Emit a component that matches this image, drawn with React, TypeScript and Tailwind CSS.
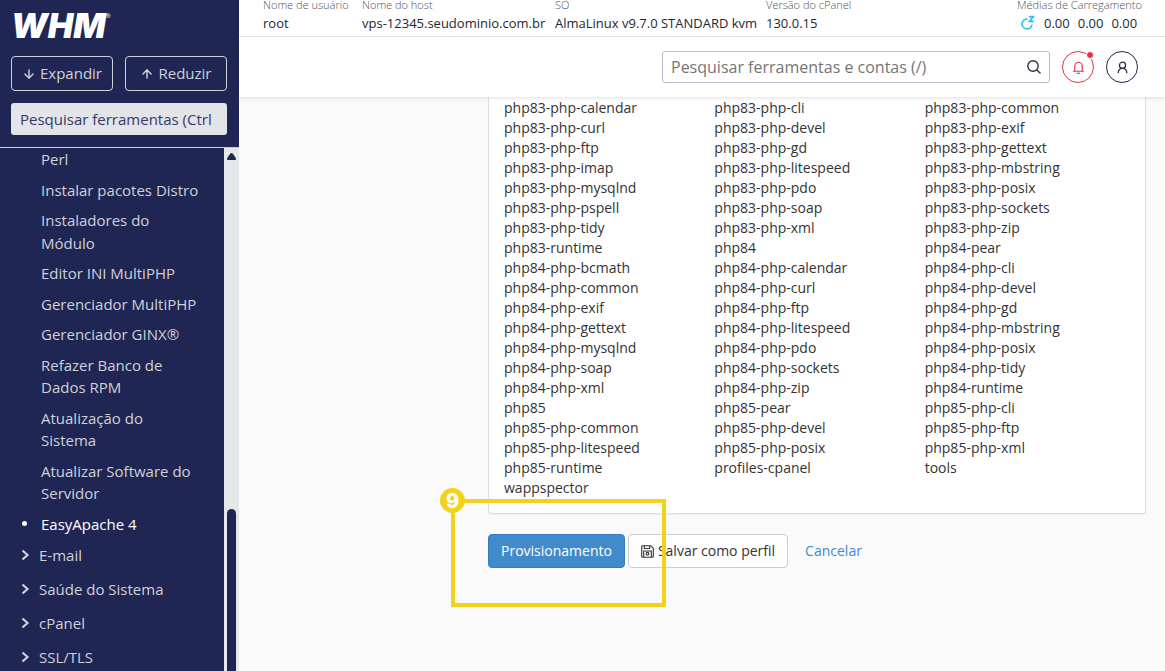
import React from 'react';
import { FiArrowDown, FiArrowUp } from 'react-icons/fi';

const subItems = [
  'Perl',
  'Instalar pacotes Distro',
  'Instaladores do Módulo',
  'Editor INI MultiPHP',
  'Gerenciador MultiPHP',
  'Gerenciador GINX®',
  'Refazer Banco de Dados RPM',
  'Atualização do Sistema',
  'Atualizar Software do Servidor',
];

const categories = ['E-mail', 'Saúde do Sistema', 'cPanel', 'SSL/TLS'];

const serverInfo = [
  { label: 'Nome de usuário', value: 'root' },
  { label: 'Nome do host', value: 'vps-12345.seudominio.com.br' },
  { label: 'SO', value: 'AlmaLinux v9.7.0 STANDARD kvm' },
  { label: 'Versão do cPanel', value: '130.0.15' },
];

const packages = [
  'php83-php-calendar', 'php83-php-cli', 'php83-php-common',
  'php83-php-curl', 'php83-php-devel', 'php83-php-exif',
  'php83-php-ftp', 'php83-php-gd', 'php83-php-gettext',
  'php83-php-imap', 'php83-php-litespeed', 'php83-php-mbstring',
  'php83-php-mysqlnd', 'php83-php-pdo', 'php83-php-posix',
  'php83-php-pspell', 'php83-php-soap', 'php83-php-sockets',
  'php83-php-tidy', 'php83-php-xml', 'php83-php-zip',
  'php83-runtime', 'php84', 'php84-pear',
  'php84-php-bcmath', 'php84-php-calendar', 'php84-php-cli',
  'php84-php-common', 'php84-php-curl', 'php84-php-devel',
  'php84-php-exif', 'php84-php-ftp', 'php84-php-gd',
  'php84-php-gettext', 'php84-php-litespeed', 'php84-php-mbstring',
  'php84-php-mysqlnd', 'php84-php-pdo', 'php84-php-posix',
  'php84-php-soap', 'php84-php-sockets', 'php84-php-tidy',
  'php84-php-xml', 'php84-php-zip', 'php84-runtime',
  'php85', 'php85-pear', 'php85-php-cli',
  'php85-php-common', 'php85-php-devel', 'php85-php-ftp',
  'php85-php-litespeed', 'php85-php-posix', 'php85-php-xml',
  'php85-runtime', 'profiles-cpanel', 'tools',
  'wappspector',
];

const Sidebar: React.FC = () => (
  <aside className="flex w-[239px] shrink-0 flex-col bg-[#202653] text-[15px] font-medium text-[#cfd0d8]">
    {/* Logo, buttons and tool search */}
    <div className="border-b border-[#c8cad8] pt-2 pr-3 pb-3 pl-[11px]">
      <a href="#home" className="flex h-9 items-center text-white">
        <span className="font-['Inter',sans-serif] text-[34px] leading-9 font-black italic">WHM</span>
        <span className="mb-5 text-[6px] leading-3">®</span>
      </a>
      <div className="mt-3 grid grid-cols-2 gap-3">
        <button className="flex h-[35px] items-center justify-center gap-1 rounded border border-[#cfd0d8]">
          <FiArrowDown className="size-[14px]" strokeWidth={2.5} />
          Expandir
        </button>
        <button className="flex h-[35px] items-center justify-center gap-1 rounded border border-[#cfd0d8]">
          <FiArrowUp className="size-[14px]" strokeWidth={2.5} />
          Reduzir
        </button>
      </div>
      <input
        type="text"
        aria-label="Pesquisar ferramentas"
        placeholder="Pesquisar ferramentas (Ctrl + /)"
        className="mt-3 block h-8 w-full rounded-[3px] bg-[#e2e4e8] pr-4 pl-[9px] text-[15px] font-normal placeholder:text-[#34396a]"
      />
    </div>

    <div className="flex min-h-0 flex-1">
      {/* Navigation */}
      <nav className="min-w-0 flex-1 overflow-hidden pr-6">
        <ul className="flex flex-col gap-2">
          {subItems.map((item) => (
            <li key={item} className="pl-[41px]">
              <a href="#item" className="block leading-normal">{item}</a>
            </li>
          ))}
          <li className="flex items-center pl-[22px] text-white">
            <span className="mr-[14px] size-[5px] rounded-full bg-white" />
            <a href="#easyapache" className="leading-normal">EasyApache 4</a>
          </li>
        </ul>
        <ul className="mt-[3px]">
          {categories.map((category) => (
            <li key={category}>
              <a href="#category" className="flex h-[34px] items-center gap-[9px] pl-[21px]">
                <svg viewBox="0 0 9 12" className="h-3 w-[9px]" fill="none" stroke="currentColor" strokeWidth="2.2">
                  <path d="M1.5 1.5 6.5 6l-5 4.5" />
                </svg>
                {category}
              </a>
            </li>
          ))}
        </ul>
      </nav>

      {/* Scrollbar */}
      <div className="flex w-[15px] flex-col items-center bg-[#e6e7e9]" aria-hidden="true">
        <svg viewBox="0 0 9 7" className="mt-[5px] h-[7px] w-[9px]" fill="#202653">
          <path d="M4.5 0C5.2 0 5.6.4 6 1l2.6 3.8C9.3 6 9 7 7.8 7H1.2C0 7-.3 6 .4 4.8L3 1c.4-.6.8-1 1.5-1z" />
        </svg>
        <div className="mt-auto h-[31%] w-[9px] rounded-t-full bg-[#202653]" />
      </div>
    </div>
  </aside>
);

const Header: React.FC = () => (
  <header className="relative bg-white shadow-[0_1px_4px_rgba(0,0,0,0.12)]">
    {/* Server information */}
    <div className="flex items-start justify-between border-b border-[#e1e2e6] pr-[23px] pb-[3px] pl-6 whitespace-nowrap">
      <div className="grid grid-cols-[87px_181px_199px_auto] gap-3">
        {serverInfo.map((info) => (
          <div key={info.label}>
            <div className="text-[11px] leading-[10px] font-light text-[#4d5360]">{info.label}</div>
            <div className="mt-[3px] text-[13px] leading-5 text-[#23272f]">{info.value}</div>
          </div>
        ))}
      </div>
      <div>
        <div className="text-[11px] leading-[10px] font-light text-[#4d5360]">Médias de Carregamento</div>
        <div className="mt-[3px] flex items-center gap-2 pl-[3px] text-[13px] leading-5 text-[#23272f]">
          <svg viewBox="0 0 16 16" className="size-4" fill="none" stroke="#23c1ee" strokeWidth="1.5">
            <path d="M7.5 4A5 5 0 1 0 12 9.5" />
            <path d="M9 1.7h4.2L9.5 6.3h4.3" strokeWidth="1.8" />
          </svg>
          <span>0.00</span>
          <span>0.00</span>
          <span>0.00</span>
        </div>
      </div>
    </div>

    {/* Search and account buttons */}
    <div className="flex h-[60px] items-center justify-end gap-3 pr-[27px]">
      <div className="flex h-8 w-[388px] items-center rounded-[3px] border border-[#b9b9cb] px-2">
        <input
          type="text"
          aria-label="Pesquisar ferramentas e contas"
          placeholder="Pesquisar ferramentas e contas (/)"
          className="min-w-0 flex-1 text-[16px] outline-none placeholder:text-[#757575]"
        />
        <button aria-label="Pesquisar">
          <svg viewBox="0 0 14 14" className="size-[14px]" fill="none" stroke="#2c3242" strokeWidth="1.4">
            <circle cx="6" cy="6" r="5.2" />
            <path d="m9.7 9.7 3.8 3.8" />
          </svg>
        </button>
      </div>
      <button
        aria-label="Notificações"
        className="relative flex size-8 items-center justify-center rounded-full border border-[#dc3545]"
      >
        <svg viewBox="0 0 14 14" className="size-[13px]" fill="none" stroke="#dc3545" strokeWidth="1.2">
          <path d="M1 11h12M3 11V5.3a4 4 0 0 1 8 0V11" />
          <path d="M5.2 13.2h3.6" />
        </svg>
        <span className="absolute -top-px -right-px size-2 rounded-full border border-white bg-[#dc3545]" />
      </button>
      <button
        aria-label="Conta"
        className="flex size-8 items-center justify-center rounded-full border border-[#202653]"
      >
        <svg viewBox="0 0 14 14" className="size-[13px]" fill="none" stroke="#2c3242" strokeWidth="1.4">
          <circle cx="7" cy="4.6" r="3.3" />
          <path d="M2.3 13.2c.2-3.2 2-5.2 4.7-5.2s4.500 2 4.700 5.200" />
        </svg>
      </button>
    </div>
  </header>
);

const App: React.FC = () => {
  return (
    <div className="flex h-screen overflow-hidden bg-[#fafafa] font-['Open_Sans',sans-serif]">
      <Sidebar />
      <div className="flex min-w-0 flex-1 flex-col">
        <Header />
        <main className="flex-1 pr-[19px] pl-[249px] text-[14px] leading-5 text-[#333333]">
          {/* Package list */}
          <ul className="grid grid-cols-3 rounded-b border border-t-0 border-[#dddddd] bg-white pt-px pr-[10px] pb-[15px] pl-[15px] shadow-[0_1px_1px_rgba(0,0,0,0.05)]">
            {packages.map((name) => (
              <li key={name}>{name}</li>
            ))}
          </ul>

          {/* Actions */}
          <div className="relative mt-5 flex items-center gap-[3px]">
            <button className="h-[34px] rounded border border-[#357ebd] bg-[#428bca] px-3 text-white">
              Provisionamento
            </button>
            <button className="flex h-[34px] items-center gap-1 rounded border border-[#cccccc] bg-white px-3">
              <svg viewBox="0 0 13 13" className="size-[13px]" fill="none" stroke="#333333" strokeWidth="1.1">
                <path d="M.7 1.7q0-1 1-1h8l2.600 2.600v8q0 1-1 1H1.700q-1 0-1-1z" />
                <path d="M3.300.7v2.800h5.400V.7M2.700 12V6h7.600v6" />
                <circle cx="6.500" cy="8.700" r="1.300" />
              </svg>
              Salvar como perfil
            </button>
            <a href="#cancelar" className="ml-[14px] text-[#428bca]">Cancelar</a>

            {/* Step marker */}
            <div className="pointer-events-none absolute -top-[35px] -left-[37px] h-[108px] w-[215px] border-4 border-[#f2d21b]">
              <span className="absolute -top-[15px] -left-[15px] flex size-[25px] items-center justify-center rounded-full bg-[#f2d21b] font-['Inter',sans-serif] text-[20px] font-extrabold text-white">
                9
              </span>
            </div>
          </div>
        </main>
      </div>
    </div>
  );
};

export default App;
